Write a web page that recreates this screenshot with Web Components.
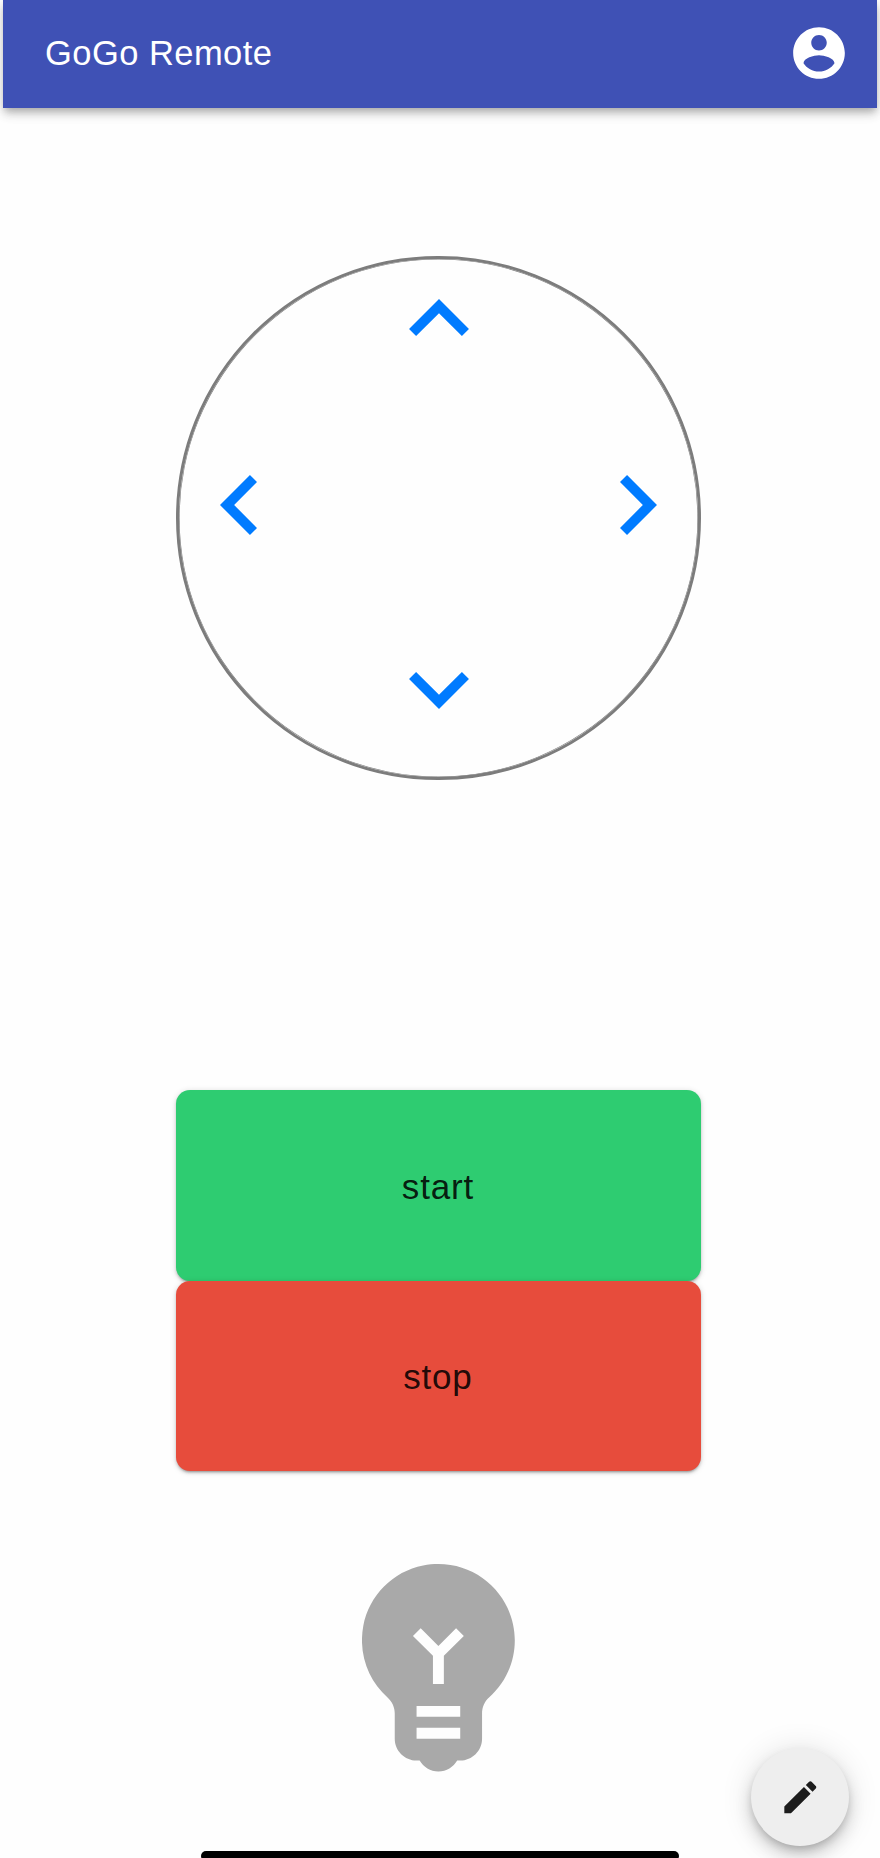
<!DOCTYPE html>
<html lang="en">
<head>
<meta charset="utf-8">
<title>GoGo Remote</title>
<style>
html,body{margin:0;height:100%;background:#fefefe}
body{font-family:"Liberation Sans",Arial,sans-serif;overflow:hidden}
</style>
</head>
<body>
<remote-app></remote-app>
<script>
const define = (name, html) => customElements.define(name, class extends HTMLElement {
  constructor() {
    super();
    this.attachShadow({ mode: 'open' }).innerHTML = html;
  }
});

define('app-bar', `
<style>
:host{display:flex;align-items:center;justify-content:space-between;box-sizing:border-box;height:108.4px;padding:0 27.5px 2px 42px;
background:#3f51b5;color:#fff;box-shadow:0 3.5px 7px -1.5px rgba(0,0,0,.22),0 7px 9px rgba(0,0,0,.13),0 2px 16px rgba(0,0,0,.08)}
h1{margin:0;font-size:34.5px;font-weight:400;line-height:56px;letter-spacing:.45px;white-space:nowrap}
svg{display:block;width:62px;height:62px;fill:currentColor}
</style>
<h1><slot></slot></h1>
<svg viewBox="0 0 24 24"><path d="M12 2C6.48 2 2 6.48 2 12s4.48 10 10 10 10-4.48 10-10S17.52 2 12 2zm0 3c1.66 0 3 1.34 3 3s-1.34 3-3 3-3-1.34-3-3 1.34-3 3-3zm0 14.2c-2.5 0-4.71-1.28-6-3.22.03-1.99 4-3.08 6-3.08 1.99 0 5.97 1.09 6 3.08-1.29 1.94-3.5 3.22-6 3.22z"/></svg>`);

define('arrow-icon', `
<style>
:host{display:block;color:#007bff}
:host([dir-to=down]){transform:scaleY(-1)}
:host([dir-to=left]) svg,:host([dir-to=right]) svg{width:37px;height:60px}
:host([dir-to=right]){transform:scaleX(-1)}
svg{display:block;width:60px;height:37px;fill:currentColor}
.h{display:none}
:host([dir-to=left]) .h,:host([dir-to=right]) .h{display:block}
:host([dir-to=left]) .v,:host([dir-to=right]) .v{display:none}
</style>
<svg class="v" viewBox="6 8 12 7.41"><path d="M12 8l-6 6 1.41 1.41L12 10.83l4.59 4.58L18 14z"/></svg>
<svg class="h" viewBox="8 6 7.41 12"><path d="M8 12l6-6 1.41 1.41L10.83 12l4.58 4.59L14 18z"/></svg>`);

define('direction-pad', `
<style>
:host{display:flex;flex-direction:column;align-items:center;justify-content:space-between;box-sizing:border-box;
width:524.6px;height:524.6px;padding:40.4px 41px 68.3px 40.4px;border:3px solid #7c7c7c;border-radius:50%;box-shadow:inset 0 0 0 .6px #7c7c7c}
.row{display:flex;justify-content:space-between;align-self:stretch;padding-top:2px}
[dir-to=up],[dir-to=down]{margin-left:2px}
</style>
<arrow-icon dir-to="up"></arrow-icon>
<div class="row"><arrow-icon dir-to="left"></arrow-icon><arrow-icon dir-to="right"></arrow-icon></div>
<arrow-icon dir-to="down"></arrow-icon>`);

define('action-button', `
<style>
:host{display:flex;align-items:center;justify-content:center;box-sizing:border-box;height:190.8px;padding:3px 1.4px 0 0;border-radius:14px;
font-size:35px;line-height:60px;letter-spacing:.8px;color:rgba(0,0,0,.87);background:var(--fill);
box-shadow:0 3px 2px -2px rgba(0,0,0,.2),0 2px 3px rgba(0,0,0,.16),0 1px 6px rgba(0,0,0,.14)}
</style><slot></slot>`);

define('bulb-icon', `
<style>:host{display:block}svg{display:block;width:152.8px;height:207.5px;fill:#a9a9a9}</style>
<svg viewBox="5 3 14 19"><path d="M12 3c-.46 0-.93.04-1.4.14-2.76.53-4.96 2.76-5.48 5.52-.48 2.61.48 5.01 2.22 6.56.43.38.66.91.66 1.47V19c0 1.1.9 2 2 2h.28c.35.6.98 1 1.72 1s1.38-.4 1.72-1H14c1.1 0 2-.9 2-2v-2.31c0-.55.22-1.09.64-1.46C18.09 13.95 19 12.08 19 10c0-3.87-3.13-7-7-7zm2 16h-4v-1h4v1zm0-2h-4v-1h4v1zm-1.5-5.59V14h-1v-2.59L9.67 9.59l.71-.71L12 10.5l1.62-1.62.71.71-1.83 1.82z"/></svg>`);

define('edit-fab', `
<style>
:host{display:flex;align-items:center;justify-content:center;width:98px;height:98px;border-radius:50%;background:#eee;color:#1c1c1c;
box-shadow:0 5px 9px -2px rgba(0,0,0,.2),0 10px 17px rgba(0,0,0,.14),0 2px 32px rgba(0,0,0,.12)}
svg{display:block;width:42.6px;height:42.6px;fill:currentColor}
</style>
<svg viewBox="0 0 24 24"><path d="M3 17.25V21h3.75L17.81 9.94l-3.75-3.75L3 17.25zM20.71 7.04c.39-.39.39-1.02 0-1.41l-2.34-2.34c-.39-.39-1.02-.39-1.41 0l-1.83 1.83 3.75 3.75 1.83-1.83z"/></svg>`);

define('remote-app', `
<style>
:host{display:block;position:relative;box-sizing:border-box;height:1858px;padding:0 3px;overflow:hidden}
main{display:flex;flex-direction:column;align-items:center;width:524.6px;margin:147.2px 0 0 173.3px}
.actions{align-self:stretch;margin:309.6px 0 92.7px}
edit-fab{position:absolute;right:30.6px;bottom:12px}
.home{position:absolute;left:201px;bottom:-3px;width:478px;height:10px;border-radius:5px;background:#000}
</style>
<app-bar>GoGo Remote</app-bar>
<main>
<direction-pad></direction-pad>
<div class="actions">
<action-button style="--fill:#2ecc71">start</action-button>
<action-button style="--fill:#e74c3c">stop</action-button>
</div>
<bulb-icon></bulb-icon>
</main>
<edit-fab></edit-fab>
<div class="home"></div>`);
</script>
</body>
</html>
